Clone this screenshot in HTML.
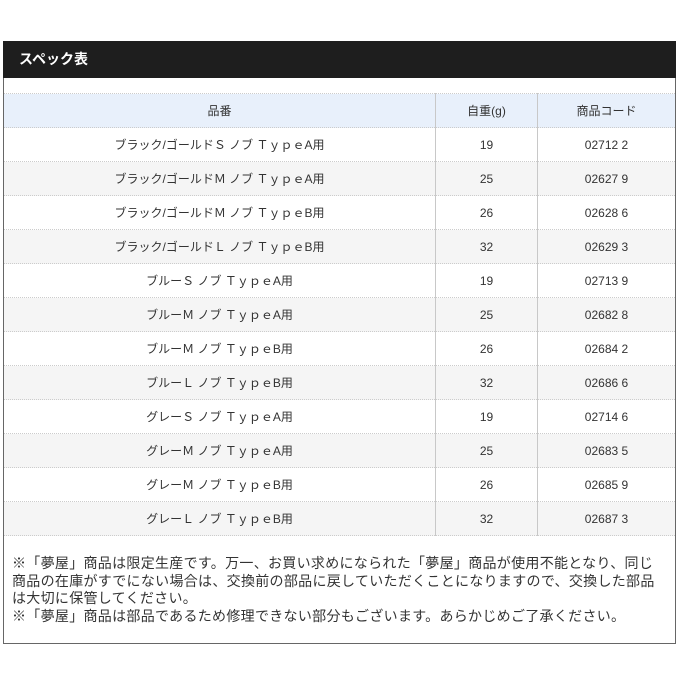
<!DOCTYPE html><html><head><meta charset="utf-8"><style>
body{margin:0;background:#fff;width:680px;height:696px;position:relative;font-family:"Liberation Sans","Noto Sans CJK JP",sans-serif;color:#333}
.box{position:absolute;left:3px;top:41px;width:671px;height:602px;border:1px solid #666;border-top:none}
.hd{position:absolute;left:3px;top:41px;width:673px;height:37px;background:#1e1e1e;color:#fff;font-weight:bold;font-size:14px;line-height:37px;text-indent:16px}
table{position:absolute;left:4px;top:93px;width:671px;border-collapse:collapse;font-size:12px}
td{height:33px;text-align:center;border-bottom:1px dotted #ccc;padding:0}
td+td{border-left:1px solid #c8c8c8}
tr.h td{background:#e8f0fb;border-top:1px dotted #ccc}
tr:nth-child(odd):not(.h) td{background:#f5f5f5}
.n{position:absolute;left:12px;top:555px;width:660px;font-size:14px;line-height:17.5px;color:#333;white-space:nowrap;letter-spacing:0.3px}
</style></head><body>
<div class="box"></div><div class="hd">スペック表</div>
<table>
<tr class="h"><td style="width:431px">品番</td><td style="width:101px">自重(g)</td><td>商品コード</td></tr>
<tr><td>ブラック/ゴールドＳ ノブ ＴｙｐｅA用</td><td>19</td><td>02712 2</td></tr>
<tr><td>ブラック/ゴールドＭ ノブ ＴｙｐｅA用</td><td>25</td><td>02627 9</td></tr>
<tr><td>ブラック/ゴールドＭ ノブ ＴｙｐｅB用</td><td>26</td><td>02628 6</td></tr>
<tr><td>ブラック/ゴールドＬ ノブ ＴｙｐｅB用</td><td>32</td><td>02629 3</td></tr>
<tr><td>ブルーＳ ノブ ＴｙｐｅA用</td><td>19</td><td>02713 9</td></tr>
<tr><td>ブルーＭ ノブ ＴｙｐｅA用</td><td>25</td><td>02682 8</td></tr>
<tr><td>ブルーＭ ノブ ＴｙｐｅB用</td><td>26</td><td>02684 2</td></tr>
<tr><td>ブルーＬ ノブ ＴｙｐｅB用</td><td>32</td><td>02686 6</td></tr>
<tr><td>グレーＳ ノブ ＴｙｐｅA用</td><td>19</td><td>02714 6</td></tr>
<tr><td>グレーＭ ノブ ＴｙｐｅA用</td><td>25</td><td>02683 5</td></tr>
<tr><td>グレーＭ ノブ ＴｙｐｅB用</td><td>26</td><td>02685 9</td></tr>
<tr><td>グレーＬ ノブ ＴｙｐｅB用</td><td>32</td><td>02687 3</td></tr>
</table>
<div class="n">※「夢屋」商品は限定生産です。万一、お買い求めになられた「夢屋」商品が使用不能となり、同じ<br>商品の在庫がすでにない場合は、交換前の部品に戻していただくことになりますので、交換した部品<br>は大切に保管してください。<br>※「夢屋」商品は部品であるため修理できない部分もございます。あらかじめご了承ください。</div>
</body></html>
